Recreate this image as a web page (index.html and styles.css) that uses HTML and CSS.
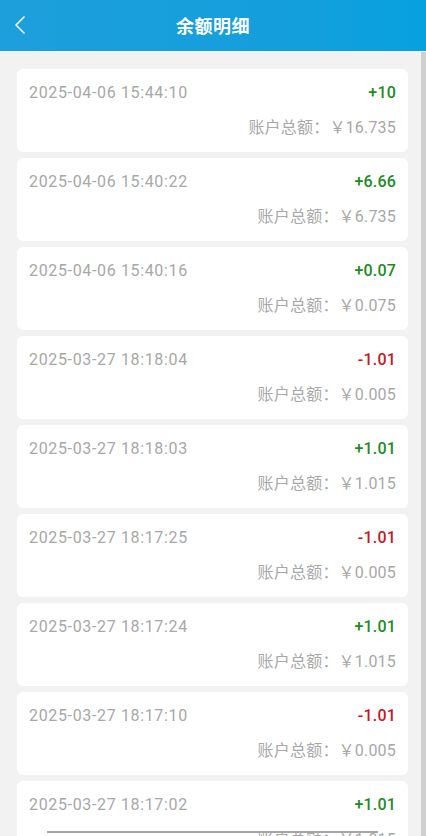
FILE: index.html
```html
<!DOCTYPE html>
<html lang="zh-CN">
<head>
<meta charset="utf-8">
<title>余额明细</title>
<link rel="stylesheet" href="styles.css">
</head>
<body>
<header class="topbar">
  <button class="back" aria-label="返回">
    <svg width="12" height="20" viewBox="0 0 12 20"><path d="M10 2 L2 10 L10 18" fill="none" stroke="#fff" stroke-width="1.6" stroke-linecap="round" stroke-linejoin="round"/></svg>
  </button>
  <h1 class="title">余额明细</h1>
  <span class="spacer"></span>
</header>
<main class="list">
  <div class="card"><div class="row"><span class="date">2025-04-06 15:44:10</span><span class="amt plus">+10</span></div><div class="total">账户总额：￥16.735</div></div>
  <div class="card"><div class="row"><span class="date">2025-04-06 15:40:22</span><span class="amt plus">+6.66</span></div><div class="total">账户总额：￥6.735</div></div>
  <div class="card"><div class="row"><span class="date">2025-04-06 15:40:16</span><span class="amt plus">+0.07</span></div><div class="total">账户总额：￥0.075</div></div>
  <div class="card"><div class="row"><span class="date">2025-03-27 18:18:04</span><span class="amt minus">-1.01</span></div><div class="total">账户总额：￥0.005</div></div>
  <div class="card"><div class="row"><span class="date">2025-03-27 18:18:03</span><span class="amt plus">+1.01</span></div><div class="total">账户总额：￥1.015</div></div>
  <div class="card"><div class="row"><span class="date">2025-03-27 18:17:25</span><span class="amt minus">-1.01</span></div><div class="total">账户总额：￥0.005</div></div>
  <div class="card"><div class="row"><span class="date">2025-03-27 18:17:24</span><span class="amt plus">+1.01</span></div><div class="total">账户总额：￥1.015</div></div>
  <div class="card"><div class="row"><span class="date">2025-03-27 18:17:10</span><span class="amt minus">-1.01</span></div><div class="total">账户总额：￥0.005</div></div>
  <div class="card"><div class="row"><span class="date">2025-03-27 18:17:02</span><span class="amt plus">+1.01</span></div><div class="total">账户总额：￥1.015</div></div>
</main>
<div class="scrollbar"></div>
<div class="hline"></div>
</body>
</html>
```
FILE: styles.css
```css
* { box-sizing: border-box; }
html, body { margin: 0; padding: 0; }
body {
  background: #f2f2f2;
  font-family: Roboto, "Noto Sans CJK SC", sans-serif;
  width: 426px;
  height: 836px;
  overflow: hidden;
  position: relative;
}
.topbar {
  height: 51px;
  background: linear-gradient(90deg, #1d9fdb 0%, #139fdc 70%, #07a1df 100%);
  display: grid;
  grid-template-columns: 51px 1fr 51px;
  align-items: center;
}
.back {
  background: none;
  border: 0;
  padding: 0 0 0 14px;
  height: 51px;
  display: flex;
  align-items: center;
  cursor: pointer;
}
.back svg { display: block; margin-top: -2px; }
.title {
  margin: 0;
  text-align: center;
  color: #fff;
  font-size: 18px;
  font-weight: 700;
  letter-spacing: 0.5px;
  margin-top: -2px;
}
.list {
  padding: 18px 18px 0 17px;
  display: flex;
  flex-direction: column;
  gap: 6px;
}
.card {
  background: #fff;
  border-radius: 6px;
  height: 83px;
  padding: 11px 12px 12px;
  display: flex;
  flex-direction: column;
  gap: 12px;
  flex-shrink: 0;
}
.row {
  display: flex;
  justify-content: space-between;
  align-items: center;
  height: 24px;
}
.date {
  color: #a8a8a8;
  font-size: 16px;
  letter-spacing: 0.65px;
}
.amt {
  font-size: 16px;
  font-weight: 500;
  letter-spacing: 0.2px;
}
.plus { color: #1d8b1f; }
.minus { color: #c8171f; }
.total {
  text-align: right;
  color: #a8a8a8;
  font-size: 16px;
  letter-spacing: 0.2px;
  line-height: 24px;
  height: 24px;
}
.scrollbar {
  position: absolute;
  right: 0;
  top: 52px;
  width: 5px;
  bottom: 0;
  background: #cfcfcf;
}
.hline {
  position: absolute;
  left: 47px;
  width: 331px;
  top: 831px;
  height: 2px;
  background: #a5a5a5;
}
```
